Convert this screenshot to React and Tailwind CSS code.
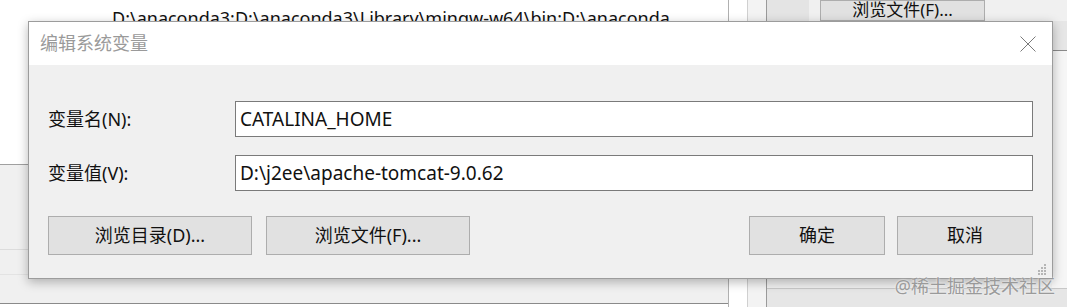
import React from "react";

const FONT = { fontFamily: '"Noto Sans", "Noto Sans CJK SC", sans-serif' };

function Btn({ children, w }) {
  return (
    <button
      className={`h-[39px] ${w} border border-[#adadad] bg-[#e1e1e1] text-[18px] text-[#111] flex items-center justify-center`}
    >
      {children}
    </button>
  );
}

function Field({ label, value }) {
  return (
    <div className="flex items-center">
      <div className="w-[187px] text-[18px] text-[#111]">{label}</div>
      <div className="flex-1 h-[36px] border border-[#7a7a7a] bg-white flex items-center pl-[4px] text-[19px] text-[#111]">
        {value}
      </div>
    </div>
  );
}

export default function App() {
  return (
    <div className="relative w-[1067px] h-[307px] overflow-hidden bg-[#f0f0f0]" style={FONT}>
      {/* background windows */}
      <div className="flex h-full">
        <div className="w-[728px] flex flex-col">
          <div className="h-[165px] bg-white border-b border-[#a0a0a0] pl-[112px] pt-[5px] text-[18px] text-[#111] whitespace-nowrap">
            D:\anaconda3;D:\anaconda3\Library\mingw-w64\bin;D:\anaconda
          </div>
          <div className="h-[85px] border-b border-[#dcdcdc]" />
          <div className="h-[25px] border-b border-[#e3e3e3]" />
          <div className="flex-1" />
          <div className="h-[4px] bg-white border-t border-[#8a8a8a]" />
        </div>
        <div className="w-[19px] border-l border-[#b0b0b0] bg-white" />
        <div className="w-[19px] border-l border-[#d0d0d0] bg-[#f3f3f3]" />
        <div className="flex-1 border-l border-[#9a9a9a] flex flex-col">
          <div className="flex h-[21px]">
            <div className="w-[42px] bg-[#e4e4e4]" />
            <div className="w-[11px]" />
            <div className="w-[165px] border border-[#adadad] bg-[#e1e1e1] flex items-end justify-center text-[17px] leading-[20px] text-[#111]">
              浏览文件(F)...
            </div>
            <div className="flex-1" />
          </div>
          <div className="flex-1 flex">
            <div className="flex-1" />
            <div className="w-[15px] flex flex-col">
              <div className="h-[30px] bg-[#e6e6e6] border-b border-[#8a8a8a]" />
              <div className="flex-1 bg-[#f6f6f6]" />
            </div>
          </div>
          <div className="h-[19px] bg-[#e6e6e6] border-t border-[#c8c8c8]" />
        </div>
      </div>

      {/* dialog */}
      <div className="absolute left-[28px] top-[21px] w-[1025px] h-[258px] border border-[#9c9c9c] bg-[#f0f0f0] shadow-[0_3px_10px_rgba(0,0,0,0.28)] flex flex-col">
        <div className="h-[43px] bg-white flex items-center justify-between pl-[11px] pr-[16px]">
          <span className="text-[18px] text-[#9a9a9a]">编辑系统变量</span>
          <svg width="16" height="16" viewBox="0 0 16 16">
            <path d="M0.5 0.5 L15.5 15.5 M15.5 0.5 L0.5 15.5" stroke="#7a7a7a" strokeWidth="1" fill="none" />
          </svg>
        </div>
        <div className="flex-1 flex flex-col pl-[19px] pr-[19px] pt-[36px]">
          <Field label="变量名(N):" value="CATALINA_HOME" />
          <div className="h-[18px]" />
          <Field label="变量值(V):" value={"D:\\j2ee\\apache-tomcat-9.0.62"} />
          <div className="h-[25px]" />
          <div className="flex">
            <Btn w="w-[204px]">浏览目录(D)...</Btn>
            <div className="w-[14px]" />
            <Btn w="w-[204px]">浏览文件(F)...</Btn>
            <div className="flex-1" />
            <Btn w="w-[136px]">确定</Btn>
            <div className="w-[12px]" />
            <Btn w="w-[136px]">取消</Btn>
          </div>
        </div>
      </div>

      {/* watermark */}
      <div className="absolute right-[12px] bottom-[10px] flex items-end">
        <span className="text-[18px] leading-[22px] text-[#9a9a9a] [text-shadow:0_0_2px_#fff]">@稀土掘金技术社区</span>
      </div>
      <svg className="absolute left-[1036px] top-[264px]" width="12" height="12" viewBox="0 0 12 12">
        <g fill="#b5b5b5">
          <rect x="8" y="0" width="2" height="2" />
          <rect x="8" y="3" width="2" height="2" />
          <rect x="5" y="3" width="2" height="2" />
          <rect x="8" y="6" width="2" height="2" />
          <rect x="5" y="6" width="2" height="2" />
          <rect x="2" y="6" width="2" height="2" />
          <rect x="8" y="9" width="2" height="2" />
          <rect x="5" y="9" width="2" height="2" />
          <rect x="2" y="9" width="2" height="2" />
        </g>
      </svg>
    </div>
  );
}
